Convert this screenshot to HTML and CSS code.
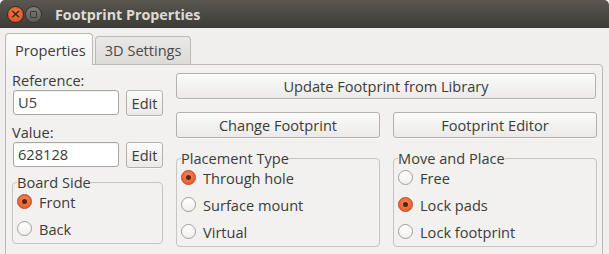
FILE: index.html
```html
<!DOCTYPE html>
<html>
<head>
<meta charset="utf-8">
<link rel="stylesheet" href="styles.css">
</head>
<body>
<div class="window">
  <div class="titlebar">
    <span class="wbtn close"><span class="x">×</span></span>
    <span class="wbtn min"><span class="sq"></span></span>
    <span class="title">Footprint Properties</span>
  </div>
  <div class="content">
    <div class="tabs">
      <div class="tab active">Properties</div>
      <div class="tab">3D Settings</div>
    </div>
    <div class="panel">
      <div class="leftcol">
        <div class="label">Reference:</div>
        <div class="field-row">
          <div class="input">U5</div>
          <div class="btn edit">Edit</div>
        </div>
        <div class="label second">Value:</div>
        <div class="field-row">
          <div class="input">628128</div>
          <div class="btn edit">Edit</div>
        </div>
        <fieldset class="group board">
          <legend>Board Side</legend>
          <div class="radio"><span class="dot on"></span>Front</div>
          <div class="radio"><span class="dot"></span>Back</div>
        </fieldset>
      </div>
      <div class="rightcol">
        <div class="btn wide">Update Footprint from Library</div>
        <div class="grid2">
          <div class="btn">Change Footprint</div>
          <div class="btn">Footprint Editor</div>
        </div>
        <div class="grid2 groups">
          <fieldset class="group">
            <legend>Placement Type</legend>
            <div class="radio"><span class="dot on"></span>Through hole</div>
            <div class="radio"><span class="dot"></span>Surface mount</div>
            <div class="radio"><span class="dot"></span>Virtual</div>
          </fieldset>
          <fieldset class="group">
            <legend>Move and Place</legend>
            <div class="radio"><span class="dot"></span>Free</div>
            <div class="radio"><span class="dot on"></span>Lock pads</div>
            <div class="radio"><span class="dot"></span>Lock footprint</div>
          </fieldset>
        </div>
      </div>
    </div>
  </div>
</div>
</body>
</html>
```
FILE: styles.css
```css
* { box-sizing: border-box; }
html, body { margin: 0; padding: 0; }
body {
  width: 609px;
  height: 254px;
  overflow: hidden;
  background: #f0efed;
  font-family: "Open Sans", "DejaVu Sans", sans-serif;
  font-size: 14.6px;
  color: #3c3c3c;
}
.window { width: 609px; height: 254px; overflow: hidden; }
.titlebar {
  height: 28px;
  display: flex;
  align-items: center;
  background: linear-gradient(#5a5750, #3c3b37);
  border-radius: 5px 5px 0 0;
  padding-left: 7px;
}
.wbtn {
  width: 17px;
  height: 17px;
  border-radius: 50%;
  display: flex;
  align-items: center;
  justify-content: center;
}
.close {
  background: radial-gradient(circle at 50% 40%, #f47a4c, #d64a18);
  border: 1px solid #3a2a22;
}
.close .x {
  color: #3b2a22;
  font-size: 13px;
  font-weight: bold;
  line-height: 1;
  margin-top: -1px;
  font-family: "DejaVu Sans", sans-serif;
}
.min {
  margin-left: 1px;
  background: linear-gradient(#807d77, #5e5c57);
  border: 1px solid #34332f;
}
.min .sq {
  width: 7px;
  height: 7px;
  border: 1.5px solid #3a3935;
  border-radius: 1px;
}
.title {
  margin-left: 13px;
  color: #dfdbd2;
  font-weight: bold;
  font-size: 14.3px;
}
.content { padding: 5px 0 0 5px; }
.tabs { display: flex; align-items: flex-end; height: 31px; }
.tab {
  height: 28px;
  padding: 0 8px 0 9px;
  margin-left: 2px;
  border: 1px solid #bcb9b4;
  border-bottom: none;
  border-radius: 4px 4px 0 0;
  background: linear-gradient(#e9e8e6, #dcdbd8);
  line-height: 27px;
  color: #4a4a4a;
}
.tab.active {
  margin-left: 0;
  height: 32px;
  padding: 0 6px 0 9px;
  background: linear-gradient(#fbfbfb, #f3f3f2);
  line-height: 33px;
  position: relative;
  z-index: 1;
  margin-bottom: -1px;
  color: #3c3c3c;
}
.panel {
  width: 598px;
  height: 200px;
  border: 1px solid #bcb9b4;
  border-radius: 0 4px 0 0;
  background: #f2f1f0;
  display: flex;
  padding: 5px 6px 0 6px;
  gap: 13px;
}
.leftcol { width: 151px; display: flex; flex-direction: column; }
.label { height: 20px; line-height: 20px; }
.label.second { margin-top: 6px; }
.field-row { display: flex; gap: 7px; padding-left: 1px; }
.input {
  width: 106px;
  height: 25px;
  border: 1px solid #a9a6a1;
  border-radius: 3px;
  background: #fff;
  line-height: 23px;
  padding-left: 4px;
  box-shadow: inset 0 1px 1px rgba(0,0,0,0.06);
}
.btn {
  height: 26px;
  border: 1px solid #b4b1ac;
  border-radius: 3px;
  background: linear-gradient(#fbfbfb, #ebeae8);
  text-align: center;
  line-height: 24px;
  box-shadow: 0 1px 0 rgba(255,255,255,0.6);
}
.btn.edit { width: 37px; }
.rightcol { flex: 1; display: flex; flex-direction: column; padding-top: 3px; }
.btn.wide { width: 420px; }
.grid2 {
  display: grid;
  grid-template-columns: 204px 204px;
  gap: 13px;
  margin-top: 13px;
}
.grid2.groups { margin-top: 12px; }
.group {
  margin: 0;
  border: 1px solid #c8c5c0;
  border-radius: 4px;
  padding: 0 4px 0 4px;
  min-width: 0;
}
.group legend {
  padding: 0;
  height: 16px;
  line-height: 16px;
  margin-left: 0;
}
.group.board { margin-top: 6px; }
.radio {
  height: 27px;
  display: flex;
  align-items: center;
  gap: 7px;
}
.group legend + .radio { margin-top: -2px; }
.group .radio:last-child { margin-bottom: 1px; }
.dot {
  width: 15px;
  height: 15px;
  border-radius: 50%;
  border: 1px solid #a19e99;
  background: linear-gradient(#ffffff, #f0efee);
  display: flex;
  align-items: center;
  justify-content: center;
  flex: none;
}
.dot.on {
  border-color: #c4451a;
  background: radial-gradient(circle at 50% 40%, #f58a5e, #e0521f);
}
.dot.on::after {
  content: "";
  width: 5px;
  height: 5px;
  border-radius: 50%;
  background: #5a2410;
}
```
